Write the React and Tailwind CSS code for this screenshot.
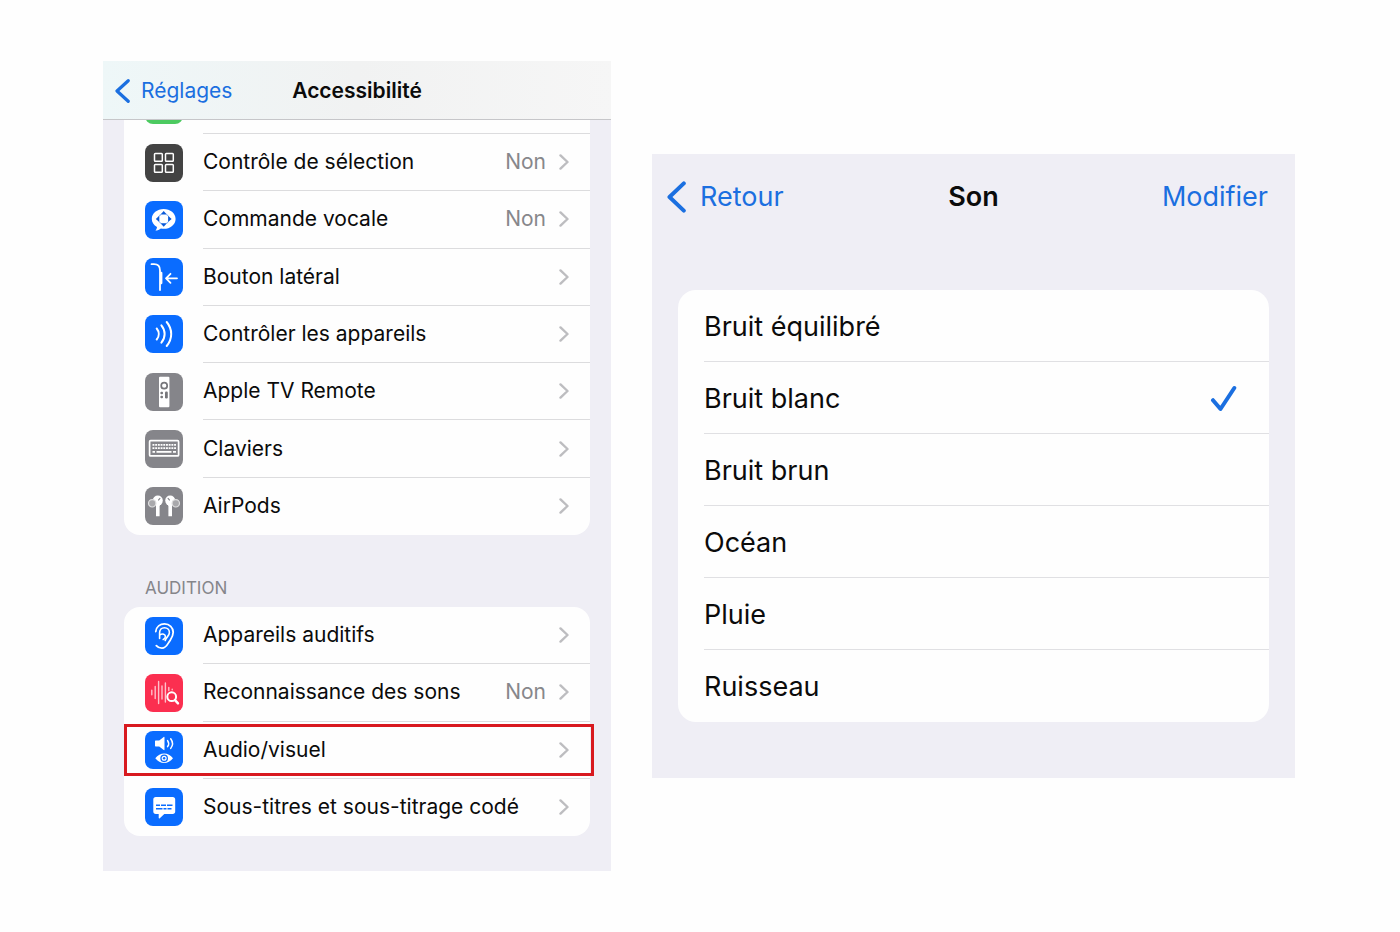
import { useState } from 'react';

const line = {
  fill: 'none',
  stroke: 'white',
  strokeWidth: 1.8,
  strokeLinecap: 'round',
  strokeLinejoin: 'round',
};

const glyphs = {
  grid: (
    <g {...line} strokeWidth="1.5">
      <rect x="9.5" y="9.5" width="7.8" height="7.8" rx="0.8" />
      <rect x="20.5" y="9.5" width="7.8" height="7.8" rx="0.8" />
      <rect x="9.5" y="20.5" width="7.8" height="7.8" rx="0.8" />
      <rect x="20.5" y="20.5" width="7.8" height="7.8" rx="0.8" />
    </g>
  ),
  voice: (
    <g>
      <path
        fill="white"
        d="M18.700 8c6.500 0 11.900 4.300 11.900 9.900s-5.400 9.900-11.900 9.900c-1 0-1.900-.1-2.800-.3-1.400 1.200-3.300 2-5.600 2.100 1-.9 1.600-2.300 1.700-3.700-3.200-1.800-5.200-4.600-5.200-8C6.800 12.300 12.200 8 18.700 8Z"
      />
      <circle cx="18.700" cy="17.900" r="5.200" fill="none" stroke="#8fbcff" strokeWidth="1.200" />
      <path d="M18.700 13v9.800M13.800 17.900h9.800" stroke="white" strokeWidth="5.600" />
      <g fill="#0a5ad8">
        <path d="m18.700 10 3.100 3.500h-6.200Z" />
        <path d="m18.700 25.800 3.100-3.500h-6.200Z" />
        <path d="m10.800 17.900 3.500-3.100V21Z" />
        <path d="m26.600 17.900-3.500-3.100V21Z" />
      </g>
    </g>
  ),
  side: (
    <g {...line}>
      <path d="M6.500 6.200h2.500c4 0 6 2.200 6 6.300V32" />
      <path d="M16.200 15v10" strokeWidth="2.400" />
      <path d="M32 20.300H21M25.500 15.800 21 20.300l4.500 4.500" />
    </g>
  ),
  waves: (
    <g {...line} strokeWidth="2">
      <path d="M11.700 13.500c2.700 3.300 2.700 7.700 0 11" />
      <path d="M16.400 10.300c4.300 5.300 4.300 12.100 0 17.400" />
      <path d="M21.700 7c6 7.300 6 16.700 0 24" />
    </g>
  ),
  remote: (
    <g>
      <rect x="14" y="3.800" width="10.400" height="30.500" rx="1" fill="white" />
      <circle cx="19.200" cy="12.700" r="3" fill="none" stroke="#77777b" strokeWidth="1.700" />
      <g fill="#77777b">
        <rect x="15.400" y="18.700" width="2.600" height="2.600" rx="1" />
        <rect x="15.400" y="22.700" width="2.600" height="2.600" rx="1" />
        <rect x="20" y="18.500" width="2.800" height="7" rx="1.200" />
      </g>
    </g>
  ),
  keyboard: (
    <g {...line}>
      <rect x="4.600" y="10.700" width="29" height="15.200" rx="1" strokeWidth="1.700" />
      <g strokeLinecap="butt" strokeWidth="1.700">
        <path d="M7.500 14.800h23.500" strokeDasharray="1.900 .8" />
        <path d="M7.500 18.200h23.500" strokeDasharray="1.900 .8" />
        <path d="M7.500 21.900h2.500M11.500 21.900h15M28 21.900h3" />
      </g>
    </g>
  ),
  airpods: (
    <g>
      <g fill="white">
        <circle cx="12.800" cy="13.600" r="5" />
        <circle cx="25.200" cy="13.600" r="5" />
        <path d="M11 15h6l-2.400 4v10.200H11Z" />
        <path d="M27 15h-6l2.400 4v10.200H27Z" />
      </g>
      <g fill="#a9a9ac" stroke="#dededf" strokeWidth="1.200">
        <circle cx="7.200" cy="16.300" r="3.700" />
        <circle cx="30.800" cy="16.300" r="3.700" />
      </g>
      <path d="m13.200 13.400 2-2.200M24.800 13.400l-2-2.200" stroke="#85858a" strokeWidth="1.200" />
    </g>
  ),
  ear: (
    <g {...line}>
      <path d="M10.800 14.500C11.400 9.800 15 6.900 19.500 6.900c5 0 8.700 3.600 8.700 8.400 0 4.300-2 6.400-4 9.400-1.800 2.900-3.300 6.500-7.300 6.500-2.400 0-4.200-.9-5.600-2.500" />
      <path d="M14.600 21.500v-5.700c0-2.900 2-5.100 4.900-5.100 2.800 0 4.900 2 4.900 4.800 0 3.800-3.300 4.400-4.200 8" strokeWidth="1.600" />
      <path d="M14.800 17.800c3-1.600 5.600-.5 5.600 1.800 0 1.400-.8 2.400-2.200 2.900" strokeWidth="1.600" />
    </g>
  ),
  recognition: (
    <g {...line}>
      <g stroke="#ffc0ca" strokeWidth="1.400">
        <path d="M6.800 16.200v4.600M10.200 12.500v12M13.600 7.500v22M17 12v13M20.400 9v19M23.800 13.500v3M27.200 15.200v.5" />
      </g>
      <circle cx="26.700" cy="22.700" r="4.400" strokeWidth="2" fill="#fb2f50" />
      <path d="m30 26.100 3 3.300" strokeWidth="2.400" />
    </g>
  ),
  audiovisual: (
    <g>
      <path fill="white" d="M10.600 9.600h3.600l4.500-3.600c.4-.3.800-.1.800.4v12.200c0 .5-.4.700-.8.400l-4.500-3.600h-3.600c-.4 0-.6-.2-.6-.6v-4.600c0-.4.200-.6.600-.6Z" />
      <path {...line} strokeWidth="1.500" d="M22.600 9.600c1.300 1.800 1.300 4.200 0 6M25.700 7.800c2.200 2.900 2.200 6.700 0 9.600" />
      <path fill="white" d="M10.300 27.300c4.600-6.400 13.100-6.400 17.700 0-4.600 6.400-13.100 6.400-17.700 0Z" />
      <circle cx="19.150" cy="27.300" r="3.200" fill="white" stroke="#0a6cff" strokeWidth="1.300" />
      <circle cx="19.150" cy="27.300" r="1.200" fill="#0a6cff" />
    </g>
  ),
  captions: (
    <g>
      <path fill="white" d="M10.800 8.900h16.900c1.600 0 2.500.9 2.500 2.500v12.100c0 1.600-.9 2.500-2.500 2.500h-8.400l-4.500 4.200c-.5.500-1.100.3-1.100-.5V26h-2.900c-1.600 0-2.500-.9-2.500-2.500V11.400c0-1.600.9-2.500 2.500-2.500Z" />
      <path fill="none" stroke="#0a6cff" strokeWidth="1.500" d="M11 17.300h4M16 17.300h5M22 17.300h5.500M11 20.700h6.500M18.500 20.700h3M22.500 20.700h4" />
    </g>
  ),
};

function Chevron() {
  return (
    <svg viewBox="0 0 10 16" className="h-4 w-[10px] shrink-0" fill="none" stroke="#bdbdc0" strokeWidth="2.400" strokeLinecap="round" strokeLinejoin="round" aria-hidden="true">
      <path d="m1.500 1.400 7 6.600-7 6.600" />
    </svg>
  );
}

function SettingRow({ icon, color, label, value, last, highlighted }) {
  return (
    <li className="relative">
      <a href="#" className="flex h-full items-stretch pl-[21px]">
        <span className={`flex size-[38px] shrink-0 self-center overflow-hidden rounded-lg ${color}`}>
          <svg viewBox="0 0 38 38" className="size-full" aria-hidden="true">{glyphs[icon]}</svg>
        </span>
        <span className={`ml-5 flex min-w-0 flex-1 items-center pr-[21px] ${last ? '' : 'border-b border-[#dcdcde]'}`}>
          <span className="flex-1 whitespace-nowrap">{label}</span>
          {value && <span className="mr-[13px] text-[#87878b]">{value}</span>}
          <Chevron />
        </span>
      </a>
      {highlighted && <span className="pointer-events-none absolute top-[2px] -right-1 bottom-[3px] left-0 border-[3px] border-[#d8191f]" />}
    </li>
  );
}

const blue = 'bg-[#0a6cff]';
const gray = 'bg-[#85858a]';

const motorRows = [
  { icon: 'grid', color: 'bg-[#434343]', label: 'Contrôle de sélection', value: 'Non' },
  { icon: 'voice', color: blue, label: 'Commande vocale', value: 'Non' },
  { icon: 'side', color: blue, label: 'Bouton latéral' },
  { icon: 'waves', color: blue, label: 'Contrôler les appareils' },
  { icon: 'remote', color: gray, label: 'Apple TV Remote' },
  { icon: 'keyboard', color: gray, label: 'Claviers' },
  { icon: 'airpods', color: gray, label: 'AirPods' },
];

const hearingRows = [
  { icon: 'ear', color: blue, label: 'Appareils auditifs' },
  { icon: 'recognition', color: 'bg-[#fb2f50]', label: 'Reconnaissance des sons', value: 'Non' },
  { icon: 'audiovisual', color: blue, label: 'Audio/visuel', highlighted: true },
  { icon: 'captions', color: blue, label: 'Sous-titres et sous-titrage codé' },
];

function Rows({ rows, className }) {
  return (
    <ul className={`grid auto-rows-fr ${className}`}>
      {rows.map((row, i) => (
        <SettingRow key={row.label} {...row} last={i === rows.length - 1} />
      ))}
    </ul>
  );
}

function AccessibilityPanel() {
  return (
    <section className="bg-[#efeef5] pb-[35px] text-[21px] leading-7 text-[#0b0b0b]">
      <header className="grid h-[59px] grid-cols-[1fr_auto_1fr] items-center border-b border-[#c6c6c9] bg-linear-to-r from-[#eef7f8] via-[#f1f2f2] to-[#f6f6f6] px-3 pt-[2px]">
        <button type="button" className="flex items-center gap-[11px] text-[#1b6fe0]">
          <svg viewBox="0 0 15 24" className="h-6 w-[15px]" fill="none" stroke="currentColor" strokeWidth="3.200" strokeLinecap="round" strokeLinejoin="round" aria-hidden="true">
            <path d="M13.200 1.700 2 12l11.200 10.300" />
          </svg>
          Réglages
        </button>
        <h1 className="font-semibold">Accessibilité</h1>
      </header>
      <div className="px-[21px]">
        <div className="rounded-b-2xl bg-[#fefefe]">
          <div className="flex h-[14px] overflow-hidden pl-[21px]">
            <span className="-mt-[34px] size-[38px] rounded-lg bg-[#4cca60]" />
            <span className="ml-5 flex-1 border-b border-[#dcdcde]" />
          </div>
          <Rows rows={motorRows} className="min-h-[401px]" />
        </div>
        <h2 className="px-[21px] pt-[41px] pb-[7px] text-[17px] leading-6 text-[#85858a]">AUDITION</h2>
        <div className="rounded-2xl bg-[#fefefe]">
          <Rows rows={hearingRows} className="min-h-[229px]" />
        </div>
      </div>
    </section>
  );
}

const sounds = ['Bruit équilibré', 'Bruit blanc', 'Bruit brun', 'Océan', 'Pluie', 'Ruisseau'];

function SoundPanel() {
  const [selected, setSelected] = useState('Bruit blanc');
  return (
    <section className="bg-[#efeef5] pb-14 text-[27px] leading-9 text-[#0b0b0b]">
      <header className="grid h-[86px] grid-cols-[1fr_auto_1fr] items-center px-[15px]">
        <button type="button" className="flex items-center gap-[14px] text-[#1b6fe0]">
          <svg viewBox="0 0 19 32" className="h-8 w-[19px]" fill="none" stroke="currentColor" strokeWidth="4" strokeLinecap="round" strokeLinejoin="round" aria-hidden="true">
            <path d="M16.800 2.400 2.500 16l14.300 13.600" />
          </svg>
          Retour
        </button>
        <h1 className="font-semibold">Son</h1>
        <button type="button" className="mr-3 justify-self-end text-[#1b6fe0]">Modifier</button>
      </header>
      <div className="mx-[26px] mt-[50px] rounded-[18px] bg-[#fefefe] pl-[26px]">
        {sounds.map((sound, i) => (
          <label key={sound} className={`relative flex h-[72px] items-center justify-between pt-[2px] pr-8 ${i < sounds.length - 1 ? 'border-b border-[#e0e0e3]' : ''}`}>
            <input type="radio" name="sound" value={sound} checked={selected === sound} onChange={() => setSelected(sound)} className="peer sr-only" />
            {sound}
            <svg viewBox="0 0 27 27" className="hidden size-[27px] peer-checked:block" fill="none" stroke="#1b6fe0" strokeWidth="4" strokeLinecap="round" strokeLinejoin="round" aria-hidden="true">
              <path d="m3 15.200 7.500 8.800L24.300 3" />
            </svg>
          </label>
        ))}
      </div>
    </section>
  );
}

export default function App() {
  return (
    <main className="grid min-h-screen grid-cols-[508fr_643fr] items-center gap-x-[41px] bg-[#fefefe] pr-[105px] pl-[103px] font-['Inter','Liberation_Sans',sans-serif]">
      <AccessibilityPanel />
      <SoundPanel />
    </main>
  );
}
